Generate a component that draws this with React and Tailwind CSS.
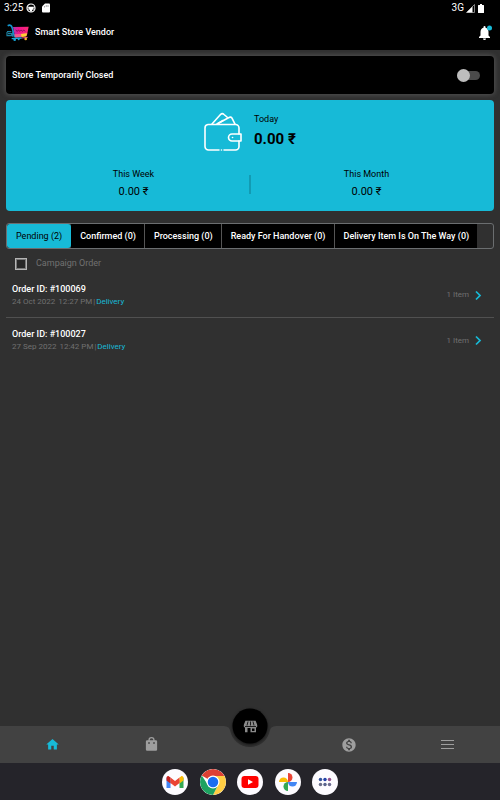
import React from "react";

const tabs = [
  "Pending (2)",
  "Confirmed (0)",
  "Processing (0)",
  "Ready For Handover (0)",
  "Delivery Item Is On The Way (0)",
];

const orders = [
  { id: "100069", date: "24 Oct 2022", time: "12:27 PM" },
  { id: "100027", date: "27 Sep 2022", time: "12:42 PM" },
];

function StatusBar() {
  return (
    <div className="flex h-4 items-center bg-black px-1 text-[10px] leading-4 text-white">
      <span>3:25</span>
      <svg className="ml-[3px] size-[10px]" viewBox="0 0 20 20" fill="none" stroke="#fff" strokeWidth="2.4">
        <circle cx="10" cy="10" r="8" />
        <path d="M3 8.500h14M4 12h5v5M16 12h-5v5" />
        <path d="M7 9h6v3H7z" fill="#fff" />
      </svg>
      <svg className="ml-[6px] h-[10px] w-2" viewBox="0 0 16 20" fill="#fff">
        <path d="M6 1h8a2 2 0 0 1 2 2v14a2 2 0 0 1-2 2H2a2 2 0 0 1-2-2V7z" />
        <path d="M5 6v3M8.500 4v4M12 4v4" stroke="#555" strokeWidth="1" />
      </svg>
      <span className="ml-auto text-[10px]">3G</span>
      <svg className="ml-[2px] size-[9px]" viewBox="0 0 18 18">
        <path d="M17 1v16H1z" fill="none" stroke="#aaa" strokeWidth="1.500" />
        <path d="M13 5v12H1z" fill="#fff" />
      </svg>
      <svg className="mr-3 ml-[3px] h-[9px] w-[6px]" viewBox="0 0 12 18" fill="#fff">
        <path d="M4 0h4v2h3a1 1 0 0 1 1 1v14a1 1 0 0 1-1 1H1a1 1 0 0 1-1-1V3a1 1 0 0 1 1-1h3z" />
      </svg>
    </div>
  );
}

function Logo() {
  return (
    <svg className="h-[18px] w-6" viewBox="0 0 72 54" fill="none">
      <defs>
        <linearGradient id="cart" x1="20" y1="0" x2="68" y2="0" gradientUnits="userSpaceOnUse">
          <stop offset="0" stopColor="#a33bb0" />
          <stop offset=".4" stopColor="#f0128c" />
          <stop offset="1" stopColor="#fb2d73" />
        </linearGradient>
      </defs>
      <path d="M5 5c8-4 12 0 14 8l7 27" stroke="#1597cf" strokeWidth="5" />
      <path d="M21 9l47-1-5 25-36 4z" fill="url(#cart)" />
      <path d="M25 31l39-3-3 9-33 4z" fill="#f2588a" />
      <path d="M45 30l18-2-2 9-14 2z" fill="#ffd22e" />
      <path d="M29 18l5 4 3-4 5 4 3-4 5 4 3-4 5 4" stroke="#7a1050" strokeWidth="2.500" />
      <path d="M3 23h13M3 24v11h14v-6H6M20 22v16" stroke="#1c82a3" strokeWidth="3.500" />
      <path d="M17 44l30-2" stroke="#22a7d7" strokeWidth="4" />
      <path d="M47 42l18-2" stroke="#f0568a" strokeWidth="3" />
      <circle cx="26" cy="47" r="4" fill="#15a5d8" />
      <circle cx="38" cy="46" r="3" fill="#15a5d8" />
      <circle cx="59" cy="45" r="4" fill="#f8b52c" />
    </svg>
  );
}

function Header() {
  return (
    <header className="flex h-[34px] items-center bg-black px-[6px]">
      <Logo />
      <h1 className="ml-[5px] text-[9px] font-medium text-white">Smart Store Vendor</h1>
      <button aria-label="Notifications" className="ml-auto">
        <svg className="h-4 w-[17px]" viewBox="0 0 34 32">
          <path
            fill="#fff"
            d="M13 4a2 2 0 0 1 4 0v1.500c4 1 6 4 6 8.500v7l3 3v2H4v-2l3-3v-7c0-4.500 2-7.500 6-8.500zM12 27h6a3 3 0 0 1-6 0z"
          />
          <circle cx="25" cy="6" r="5" fill="#17bad7" />
        </svg>
      </button>
    </header>
  );
}

function Wallet() {
  return (
    <svg className="h-10 w-[38px]" viewBox="0 0 38 40" fill="none" stroke="#fff" strokeWidth="1.600" strokeLinecap="round" strokeLinejoin="round">
      <path d="M35 22v-6a3.500 3.500 0 0 0-3.500-3.500H4A3.500 3.500 0 0 0 1 16v18.500A3.500 3.500 0 0 0 4.500 38H15M20 38h11.500a3.500 3.500 0 0 0 3.500-3.500V29" />
      <path d="M17.400 38h.1" />
      <path d="M8 12l8.500-9.500a2.500 2.500 0 0 1 3.500 0L23 5M13 12l12-6.500a2 2 0 0 1 3 .7l3 6" />
      <path d="M19 8.500l-5 3" />
      <path d="M37 22h-9a3.500 3.500 0 0 0 0 7h9z" />
      <path d="M28.500 25.500h.1" />
    </svg>
  );
}

function Earnings() {
  return (
    <section className="mt-[6px] flex h-[111px] flex-col rounded-[4px] bg-[#17bad7] px-3 text-black">
      <div className="flex justify-center gap-3 pt-3 pr-1">
        <div className="flex flex-1 justify-end">
          <Wallet />
        </div>
        <div className="flex-1 pt-px">
          <p className="text-[9px] leading-3">Today</p>
          <p className="mt-1 text-[15px] leading-5 font-bold">0.00 ₹</p>
        </div>
      </div>
      <div className="mt-4 flex items-center text-center">
        <div className="flex-1">
          <p className="text-[9px] leading-3">This Week</p>
          <p className="mt-1 text-[11px] leading-4">0.00 ₹</p>
        </div>
        <div className="h-[19px] w-[2px] bg-[#129bb3]" />
        <div className="flex-1">
          <p className="text-[9px] leading-3">This Month</p>
          <p className="mt-1 text-[11px] leading-4">0.00 ₹</p>
        </div>
      </div>
    </section>
  );
}

function Order({ order }) {
  return (
    <li className="flex h-[45px] items-center border-[#505050] px-[6px] not-last:border-b">
      <div>
        <p className="text-[9px] leading-[13px] font-medium text-white">Order ID: #{order.id}</p>
        <p className="flex text-[8px] leading-3 text-[#707070]">
          <span>{order.date}</span>
          <span className="ml-[3px]">{order.time}</span>
          <span className="mx-px">|</span>
          <span className="text-[#17bad7]">Delivery</span>
        </p>
      </div>
      <span className="ml-auto text-[8px] text-[#707070]">1 Item</span>
      <button aria-label={"Open order " + order.id} className="mr-[6px] ml-[6px]">
        <svg className="h-[11px] w-[7px]" viewBox="0 0 14 22" fill="none" stroke="#17bad7" strokeWidth="3.500">
          <path d="M2 3l8 8-8 8" />
        </svg>
      </button>
    </li>
  );
}

function BottomNav() {
  return (
    <nav className="relative grid h-[37px] grid-cols-5 items-center bg-[#424242] px-[3px] text-[#9e9e9e]">
      <svg className="absolute top-0 left-1/2 h-6 w-14 -translate-x-1/2" viewBox="0 0 56 24">
        <path d="M0 0C5 0 7 1 8 4c2 10 10 17 20 17s18-7 20-17c1-3 3-4 8-4z" fill="#303030" />
      </svg>
      <button aria-label="Home" className="flex justify-center text-[#17bad7]">
        <svg className="size-[15px]" viewBox="0 0 24 24" fill="currentColor">
          <path d="M10 20v-6h4v6h5v-8h3L12 3 2 12h3v8z" />
        </svg>
      </button>
      <button aria-label="Orders" className="flex justify-center">
        <svg className="size-[15px]" viewBox="0 0 24 24" fill="currentColor">
          <path d="M19 5h-2a5 5 0 0 0-10 0H5a2 2 0 0 0-2 2v13a2 2 0 0 0 2 2h14a2 2 0 0 0 2-2V7a2 2 0 0 0-2-2zm-7-3a3 3 0 0 1 3 3H9a3 3 0 0 1 3-3zM7 8h2v3H7zm8 0h2v3h-2z" />
        </svg>
      </button>
      <span />
      <button aria-label="Wallet" className="flex justify-center">
        <svg className="size-4" viewBox="0 0 24 24" fill="currentColor">
          <path d="M12 2C6.480 2 2 6.480 2 12s4.480 10 10 10 10-4.480 10-10S17.520 2 12 2zm1.410 16.090V20h-2.670v-1.930c-1.710-.36-3.160-1.460-3.270-3.400h1.960c.1 1.050.82 1.870 2.650 1.870 1.960 0 2.400-.98 2.400-1.590 0-.83-.44-1.610-2.670-2.140-2.480-.6-4.180-1.620-4.180-3.670 0-1.720 1.390-2.840 3.110-3.210V4h2.670v1.950c1.860.45 2.790 1.860 2.850 3.390H14.300c-.05-1.110-.64-1.870-2.220-1.870-1.500 0-2.400.68-2.400 1.640 0 .84.65 1.390 2.670 1.910s4.180 1.390 4.180 3.910c-.01 1.830-1.380 2.830-3.120 3.160z" />
        </svg>
      </button>
      <button aria-label="Menu" className="flex justify-center">
        <svg className="h-[9px] w-[13px]" viewBox="0 0 13 9" fill="currentColor">
          <path d="M0 0h13v1H0zM0 4h13v1H0zM0 8h13v1H0z" />
        </svg>
      </button>
      <button
        aria-label="Store"
        className="absolute top-0 left-1/2 flex size-[35px] -translate-x-1/2 -translate-y-1/2 items-center justify-center rounded-full bg-black shadow-[0_1px_3px_rgba(0,0,0,0.6)]"
      >
        <svg className="h-3 w-[14px]" viewBox="0 0 28 24" fill="#8a8a8a">
          <path d="M4 0h20l4 10c0 2-1 4-3 4v10H14v-9H8v9H3V14c-2 0-3-2-3-4zM17 16v5h5v-5z" fillRule="evenodd" />
          <path d="M9 2L7 10M14 2v8M19 2l2 8M3 12h22" stroke="#111" strokeWidth="1.800" />
        </svg>
      </button>
    </nav>
  );
}

function DockButton({ label, children }) {
  return (
    <button aria-label={label} className="size-[26px] overflow-hidden rounded-full bg-[#fdfbff]">
      <svg className="size-full" viewBox="0 0 52 52">
        {children}
      </svg>
    </button>
  );
}

function Dock() {
  return (
    <footer className="flex h-[37px] items-center justify-center bg-[#25242a]">
      <div className="flex w-[176px] justify-between">
        <DockButton label="Gmail">
          <path d="M9 17v21h8V23z" fill="#4285f4" />
          <path d="M43 17v21h-8V23z" fill="#34a853" />
          <path d="M35 17l3-2c2-2 5 0 5 3v5l-8 6z" fill="#fbbc04" />
          <path d="M17 17l9 7 9-7v11l-9 7-9-7z" fill="#ea4335" />
          <path d="M17 17l-3-2c-2-2-5 0-5 3v5l8 6z" fill="#c5221f" />
        </DockButton>
        <DockButton label="Chrome">
          <path d="M26 26L3.500 13A26 26 0 0 1 48.500 13z" fill="#dd4033" />
          <path d="M26 14h23A26 26 0 0 1 26 52l10-20z" fill="#ffce43" />
          <path d="M16 32L3.500 13A26 26 0 0 0 26 52l10-20z" fill="#1da260" />
          <circle cx="26" cy="26" r="13" fill="#fff" />
          <circle cx="26" cy="26" r="10.500" fill="#1a6df0" />
        </DockButton>
        <DockButton label="YouTube">
          <rect x="9" y="14" width="34" height="24" rx="6" fill="#f00" />
          <path d="M22 20.500l10 5.500-10 5.500z" fill="#fff" />
        </DockButton>
        <DockButton label="Photos">
          <path d="M26 26V8a9 9 0 0 1 0 18z" fill="#ea4335" />
          <path d="M26 26h18a9 9 0 0 1-18 0z" fill="#4285f4" />
          <path d="M26 26v18a9 9 0 0 1 0-18z" fill="#34a853" />
          <path d="M26 26H8a9 9 0 0 1 18 0z" fill="#fbbc04" />
        </DockButton>
        <DockButton label="All apps">
          <circle cx="17" cy="21" r="3.500" fill="#34549c" />
          <circle cx="26" cy="21" r="3.500" fill="#2541a8" />
          <circle cx="35" cy="21" r="3.500" fill="#93508c" />
          <circle cx="17" cy="31" r="3.500" fill="#6a6c88" />
          <circle cx="26" cy="31" r="3.500" fill="#59638d" />
          <circle cx="35" cy="31" r="3.500" fill="#6c6b91" />
        </DockButton>
      </div>
    </footer>
  );
}

export default function App() {
  return (
    <div className="flex min-h-screen flex-col bg-[#303030] font-[Roboto,sans-serif]">
      <StatusBar />
      <Header />
      <main className="flex-1 px-[6px] pt-[6px]">
        <label className="flex h-[38px] items-center justify-between rounded-[4px] bg-black pt-px pr-[14px] pl-[6px] text-[9px] font-medium text-white shadow-[0_0_4px_1px_#505050]">
          Store Temporarily Closed
          <input
            type="checkbox"
            role="switch"
            className="flex h-[9px] w-[23px] appearance-none items-center rounded-full bg-[#4a4a4a] before:size-[13px] before:rounded-full before:bg-[#bdbdbd]"
          />
        </label>
        <Earnings />
        <div role="tablist" className="mt-3 flex h-[26px] overflow-hidden rounded-[3px] border border-[#6b6e70] text-[9px] font-medium text-white">
          {tabs.map((tab, i) => (
            <button
              key={tab}
              role="tab"
              aria-selected={i === 0}
              className="shrink-0 border-r border-[#555] bg-black pt-px pr-2 pl-[9px] first:border-r-0 first:pr-[9px] last:border-r-0 aria-selected:rounded-[3px] aria-selected:bg-[#17bad7] aria-selected:font-normal aria-selected:text-black"
            >
              {tab}
            </button>
          ))}
        </div>
        <label className="mt-[5px] flex h-[19px] items-center gap-[9px] pl-[9px] text-[9px] text-[#707070]">
          <input
            type="checkbox"
            className="size-3 appearance-none border border-[#b5b5b5] bg-[#262626] shadow-[inset_0_0_0_1px_#777]"
          />
          Campaign Order
        </label>
        <ul>
          {orders.map((order) => (
            <Order key={order.id} order={order} />
          ))}
        </ul>
      </main>
      <BottomNav />
      <Dock />
    </div>
  );
}
